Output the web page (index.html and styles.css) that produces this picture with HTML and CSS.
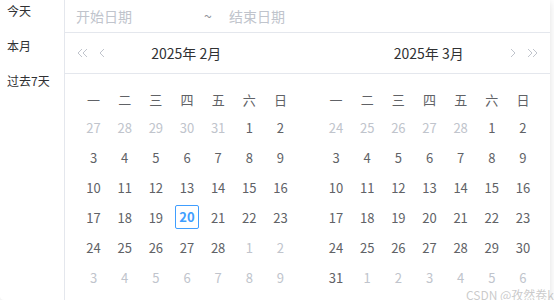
FILE: index.html
```html
<!DOCTYPE html>
<html lang="zh">
<head>
  <meta charset="UTF-8">
  <title>日期范围选择</title>
  <link rel="stylesheet" href="styles.css">
</head>
<body>
  <div class="picker">
    <!-- 快捷选项 -->
    <div class="sidebar">
      <div class="shortcut">今天</div>
      <div class="shortcut">本月</div>
      <div class="shortcut">过去7天</div>
    </div>

    <div class="main">
      <div class="range-input">
        <span class="range-start">开始日期</span>
        <span class="range-sep">~</span>
        <span class="range-end">结束日期</span>
      </div>

      <div class="panels">
        <!-- 左侧：2月 -->
        <div class="panel">
          <div class="panel-head">
            <div class="arrows">
              <svg class="arrow-dbl" width="11" height="10" viewBox="0 0 11 10"><path d="M5 1 L1 5 L5 9 M10 1 L6 5 L10 9" /></svg>
              <svg class="arrow" width="6" height="10" viewBox="0 0 6 10"><path d="M5 1 L1 5 L5 9" /></svg>
            </div>
            <div class="title">2025年 2月</div>
            <div class="arrows right"></div>
          </div>
          <table class="days">
            <tr class="week"><th>一</th><th>二</th><th>三</th><th>四</th><th>五</th><th>六</th><th>日</th></tr>
            <tr><td class="other">27</td><td class="other">28</td><td class="other">29</td><td class="other">30</td><td class="other">31</td><td>1</td><td>2</td></tr>
            <tr><td>3</td><td>4</td><td>5</td><td>6</td><td>7</td><td>8</td><td>9</td></tr>
            <tr><td>10</td><td>11</td><td>12</td><td>13</td><td>14</td><td>15</td><td>16</td></tr>
            <tr><td>17</td><td>18</td><td>19</td><td><span class="today">20</span></td><td>21</td><td>22</td><td>23</td></tr>
            <tr><td>24</td><td>25</td><td>26</td><td>27</td><td>28</td><td class="other">1</td><td class="other">2</td></tr>
            <tr><td class="other">3</td><td class="other">4</td><td class="other">5</td><td class="other">6</td><td class="other">7</td><td class="other">8</td><td class="other">9</td></tr>
          </table>
        </div>

        <!-- 右侧：3月 -->
        <div class="panel">
          <div class="panel-head">
            <div class="arrows"></div>
            <div class="title">2025年 3月</div>
            <div class="arrows right">
              <svg class="arrow" width="6" height="10" viewBox="0 0 6 10"><path d="M1 1 L5 5 L1 9" /></svg>
              <svg class="arrow-dbl" width="11" height="10" viewBox="0 0 11 10"><path d="M1 1 L5 5 L1 9 M6 1 L10 5 L6 9" /></svg>
            </div>
          </div>
          <table class="days">
            <tr class="week"><th>一</th><th>二</th><th>三</th><th>四</th><th>五</th><th>六</th><th>日</th></tr>
            <tr><td class="other">24</td><td class="other">25</td><td class="other">26</td><td class="other">27</td><td class="other">28</td><td>1</td><td>2</td></tr>
            <tr><td>3</td><td>4</td><td>5</td><td>6</td><td>7</td><td>8</td><td>9</td></tr>
            <tr><td>10</td><td>11</td><td>12</td><td>13</td><td>14</td><td>15</td><td>16</td></tr>
            <tr><td>17</td><td>18</td><td>19</td><td>20</td><td>21</td><td>22</td><td>23</td></tr>
            <tr><td>24</td><td>25</td><td>26</td><td>27</td><td>28</td><td>29</td><td>30</td></tr>
            <tr><td>31</td><td class="other">1</td><td class="other">2</td><td class="other">3</td><td class="other">4</td><td class="other">5</td><td class="other">6</td></tr>
          </table>
        </div>
      </div>
    </div>

    <div class="watermark">CSDN @孜然卷k</div>
  </div>
</body>
</html>
```

FILE: styles.css
```css
body {
  margin: 0;
  background: #fff;
  font-family: "Noto Sans CJK SC", "Noto Sans", sans-serif;
  color: #606266;
}

.picker {
  position: relative;
  display: flex;
  width: 550px;
  height: 300px;
  background: #fff;
  border-radius: 0 0 4px 4px;
  box-shadow: 0 2px 8px rgba(0, 0, 0, 0.12);
}

.sidebar {
  width: 64px;
  border-right: 1px solid #e4e7ed;
  font-size: 12px;
  color: #303133;
}

.shortcut {
  line-height: 21px;
  padding: 0 0 14px 7px;
}

.main {
  flex: 1;
  display: flex;
  flex-direction: column;
}

.range-input {
  height: 32px;
  display: flex;
  align-items: center;
  padding-left: 11px;
  border-bottom: 1px solid #e4e7ed;
  font-size: 14px;
  color: #c0c4cc;
}

.range-start {
  width: 126px;
}

.range-sep {
  width: 12px;
  text-align: center;
  color: #909399;
}

.range-end {
  margin-left: 15px;
}

.panels {
  display: flex;
}

.panel {
  flex: 1;
}

.panel-head {
  height: 40px;
  display: grid;
  grid-template-columns: 1fr auto 1fr;
  align-items: center;
  padding: 0 12px;
  border-bottom: 1px solid #e4e7ed;
}

.arrows {
  display: flex;
  align-items: center;
  gap: 11px;
}

.arrows.right {
  justify-content: flex-end;
}

.arrows svg path {
  fill: none;
  stroke: #c0c4cc;
  stroke-width: 1;
}

.title {
  font-size: 14px;
  font-weight: normal;
  color: #303133;
}

.days {
  width: 218px;
  margin: 12px 0 0 13px;
  border-collapse: collapse;
  table-layout: fixed;
  font-size: 13px;
}

.days th {
  height: 26px;
  padding: 0;
  font-weight: normal;
  color: #606266;
}

.days td {
  height: 30px;
  padding: 0;
  text-align: center;
}

.days td.other {
  color: #c0c4cc;
}

.today {
  display: inline-block;
  width: 22px;
  height: 22px;
  line-height: 22px;
  border: 1px solid #409eff;
  border-radius: 2px;
  color: #409eff;
  font-weight: bold;
}

.watermark {
  position: absolute;
  right: -4px;
  bottom: -3px;
  font-size: 12px;
  color: rgba(150, 150, 150, 0.5);
}
```
